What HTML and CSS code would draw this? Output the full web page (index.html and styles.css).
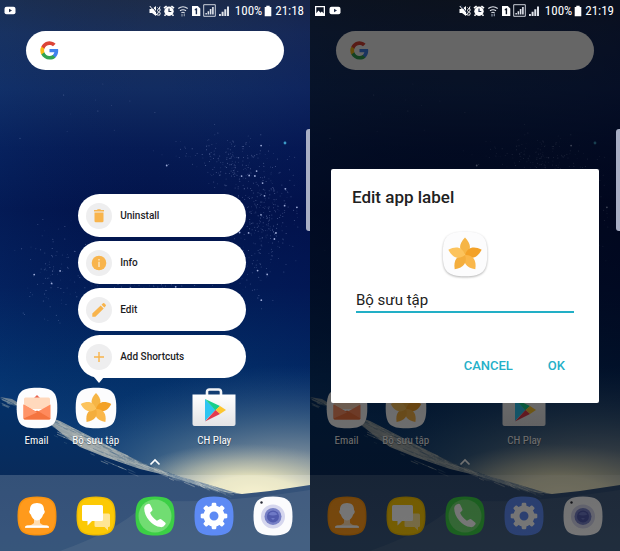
FILE: index.html
```html
<!DOCTYPE html>
<html lang="vi">
<head>
<meta charset="utf-8">
<meta name="viewport" content="width=device-width, initial-scale=1">
<title>Edit app label</title>
<link rel="stylesheet" href="styles.css">
</head>
<body>
<svg class="sprites" aria-hidden="true">
  <defs>
    <linearGradient id="sky" x1="0" y1="0" x2="0" y2="1">
      <stop offset="0" stop-color="#1d2c49"/><stop offset=".06" stop-color="#1a2f59"/>
      <stop offset=".16" stop-color="#122c61"/><stop offset=".27" stop-color="#061b54"/>
      <stop offset=".38" stop-color="#02134a"/><stop offset=".52" stop-color="#021b55"/>
      <stop offset=".68" stop-color="#033069"/><stop offset=".8" stop-color="#0d3e76"/>
    </linearGradient>
    <linearGradient id="shade" x1="0" y1="0" x2="1" y2="0">
      <stop offset="0" stop-color="#0c4390" stop-opacity=".16"/><stop offset=".5" stop-color="#062060" stop-opacity="0"/>
      <stop offset="1" stop-color="#000850" stop-opacity=".2"/>
    </linearGradient>
    <radialGradient id="haze" gradientUnits="userSpaceOnUse" cx="0" cy="0" r="1" gradientTransform="translate(290 500) scale(260 135)">
      <stop offset="0" stop-color="#a5adaa"/><stop offset=".3" stop-color="#8c9aa2" stop-opacity=".9"/>
      <stop offset=".6" stop-color="#4e6f8c" stop-opacity=".65"/><stop offset="1" stop-color="#244f80" stop-opacity="0"/>
    </radialGradient>
    <radialGradient id="glow" gradientUnits="userSpaceOnUse" cx="0" cy="0" r="1" gradientTransform="translate(255 494) rotate(3) scale(130 50)">
      <stop offset="0" stop-color="#f4eec4"/><stop offset=".35" stop-color="#e9e5bd" stop-opacity=".95"/>
      <stop offset=".65" stop-color="#c3c5ae" stop-opacity=".6"/><stop offset="1" stop-color="#9ba7a5" stop-opacity="0"/>
    </radialGradient>
    <linearGradient id="ground" x1="0" y1="0" x2="0" y2="1">
      <stop offset="0" stop-color="#033068"/><stop offset=".5" stop-color="#082b5b"/><stop offset="1" stop-color="#0c315f"/>
    </linearGradient>
    <linearGradient id="snow" x1="0" y1="0" x2="1" y2="0">
      <stop offset="0" stop-color="#667d92"/><stop offset=".35" stop-color="#a5adad"/><stop offset=".7" stop-color="#8797a1"/><stop offset="1" stop-color="#57728b"/>
    </linearGradient>
    <linearGradient id="bag" x1="0" y1="0" x2="0" y2="1"><stop offset="0" stop-color="#fff"/><stop offset="1" stop-color="#e3e3e5"/></linearGradient>
    <filter id="soft"><feGaussianBlur stdDeviation=".5"/></filter>
  </defs>

  <symbol id="wallpaper" viewBox="0 0 310 551" preserveAspectRatio="none">
    <rect width="310" height="551" fill="url(#sky)"/>
    <rect width="310" height="551" fill="url(#shade)"/>
    <rect y="350" width="310" height="201" fill="url(#haze)"/>
    <rect y="400" width="310" height="151" fill="url(#glow)"/>
    <g id="stars"></g>
    <circle cx="285" cy="143" r="1.4" fill="#3c9bc8"/>
    <path d="M0 397 12 400 30 412 60 422 95 440 140 462 180 477 225 492 242 494 270 491 310 485V551H0z" fill="url(#ground)"/>
    <path d="M0 397 12 399 32 411 60 421 95 439 140 462 160 471 200 482 240 494 210 489 165 475 140 469 105 457 80 447 66 437 50 424 20 407z" fill="url(#snow)" filter="url(#soft)"/>
    <g id="ridge" fill="none"></g>
    <path d="M150 500Q210 505 310 490V551H60Q120 530 150 500z" fill="#6d8190" opacity=".16" filter="url(#soft)"/>
  </symbol>

  <symbol id="youtube" viewBox="0 0 12 9"><rect x=".5" y=".8" width="11" height="7.4" rx="2" fill="#fff"/><path d="M5 2.8v3.4l3-1.7z" fill="#24314c"/></symbol>
  <symbol id="picture" viewBox="0 0 12 12"><path fill="#fff" fill-rule="evenodd" d="M1 1h10v10H1zM2.3 2.3v6l2.2-2.7 2 2.1 1.4-1.3 1.8 2V2.3z"/></symbol>
  <symbol id="mute" viewBox="0 0 12 12"><path fill="#fff" d="M.5 4h2.500L7 1v10L3 8H.5z"/><path d="M1.800 0l7 9" stroke="#22304c" stroke-width="1"/><path d="M.8 1l7.500 9.500M8.500 2.500l1 1-1 2 1 1.500-1 2 1 1.500M11 1.500l-.6 1.500.8 2-.8 1.500.8 2-.8 2" fill="none" stroke="#fff"/></symbol>
  <symbol id="alarm" viewBox="0 0 12 12"><circle cx="6" cy="6.3" r="4.700" fill="#fff"/><path d="M1 3.2 3.6 1M11 3.2 8.4 1M2.7 9.5l-1.2 1.3M9.3 9.5l1.2 1.3" stroke="#fff" stroke-width="1.6"/><path d="M6 3.5v3h2.3" fill="none" stroke="#24314c" stroke-width="1.2"/></symbol>
  <symbol id="wifi" viewBox="0 0 12 12"><path d="M1.3 3.5q4.7-3.6 9.4 0M3 5.8q3-2.2 6 0M4.4 7.8q1.6-1 3.2 0" fill="none" stroke="#dfe3ea" stroke-width="1.1"/><path d="M5 9v2.6M7.3 8.4v2.8" stroke="#8d97a9" stroke-width="1.2"/></symbol>
  <symbol id="sim" viewBox="0 0 10 12"><path fill="#fff" fill-rule="evenodd" d="M1 1h5.8L9.3 3.5V11H1zM3.7 4.2v1h1v4h1.4V3.3h-1z"/></symbol>
  <symbol id="bars" viewBox="0 0 12 12"><path fill="#dfe3ea" d="M1 9h1.900v2H1zM3.600 6.8h2V11h-2zM6.300 4.2h2V11h-2zM9 1.5h2V11H9z"/></symbol>
  <symbol id="barsbox" viewBox="0 0 13 13"><path d="M.7.7h11.6v11.6H.7z" fill="none" stroke="#dfe3ea" stroke-width=".9"/><path fill="#dfe3ea" d="M2.4 9h1.500v1.6H2.4zM4.6 7.2h1.500v3.4H4.6zM6.8 5.1h1.600v5.5H6.8zM9.1 3h1.600v7.6H9.1z"/></symbol>
  <symbol id="battery" viewBox="0 0 8 12"><path fill="#fff" d="M2.300.8h3.400V2h1.600v9.200H.7V2h1.600z"/></symbol>

  <symbol id="google" viewBox="0 0 48 48">
    <path fill="#4081ec" d="M46 24.6c0-1.600-.1-3-.4-4.600H24v8.700h12.400c-.6 3-2.200 5.400-4.700 7v5.800h7.500C43.500 37.500 46 31.600 46 24.600z"/>
    <path fill="#31a452" d="M24 47c6.200 0 11.500-2 15.300-5.600l-7.500-5.800c-2 1.400-4.700 2.300-7.800 2.300-6 0-11-4-12.900-9.500H3.400v6C7.200 42 15 47 24 47z"/>
    <path fill="#f8bb16" d="M11.100 28.400a14 14 0 0 1 0-8.800v-6H3.400a23 23 0 0 0 0 20.800z"/>
    <path fill="#dc4437" d="M24 10.100c3.400 0 6.400 1.200 8.800 3.400l6.600-6.600A23 23 0 0 0 3.400 13.600l7.700 6C13 14.100 18 10.100 24 10.100z"/>
  </symbol>

  <symbol id="trash" viewBox="0 0 16 16"><path fill="#f8b44c" d="M3 2h3l.7-.7h2.600L10 2h3v1.500H3zM3.500 4.400h9V13q0 1.300-1.300 1.300H4.800Q3.500 14.300 3.500 13z"/></symbol>
  <symbol id="info" viewBox="0 0 16 16"><circle cx="8" cy="8" r="7.300" fill="#f8b44c"/><path d="M8 4v1.500M8 6.800V12" stroke="#fbe4bb" stroke-width="1.500"/></symbol>
  <symbol id="pencil" viewBox="0 0 16 16"><path fill="#f8b44c" d="M1.300 14.700v-3.200L9.700 3.400l3 3-8.300 8.300zM10.500 2.700l1.500-1.400q.7-.5 1.300 0l1.400 1.500q.6.600 0 1.200l-1.300 1.500z"/></symbol>
  <symbol id="plus" viewBox="0 0 16 16"><path d="M8 3v10M3 8h10" stroke="#f8b44c" stroke-width="1.400"/></symbol>

  <symbol id="email" viewBox="0 0 42 42">
    <path d="M21 .7C37 .7 41.300 5 41.300 21S37 41.300 21 41.300.7 37 .7 21 5 .7 21 .7z" fill="#fdfdfe"/>
    <path d="M17 12l4-4 4 4z" fill="#e8634c"/><path d="M8 12q0-1.500 1.500-1.500h23Q34 10.500 34 12v10H8z" fill="#ffd9bd"/>
    <path d="M7.500 17.500 21 25l13.500-7.500V31q0 1.500-1.500 1.500H9Q7.500 32.500 7.500 31z" fill="#ff8a5c"/>
    <path d="M7.500 31.500 21 23.500l13.500 8q-.3 1-1.500 1H9q-1.200 0-1.500-1z" fill="#f4743f"/><path d="M7.500 17.500 21 25.500 7.500 31.500z" fill="#ff9468"/>
  </symbol>
  <symbol id="gallery" viewBox="0 0 42 42">
    <path d="M21 .7C37 .7 41.300 5 41.300 21S37 41.300 21 41.300.7 37 .7 21 5 .7 21 .7z" fill="#fcfcfd"/>
    <g transform="translate(21 22)">
      <path d="M0 0C-6-4-6-10 0-16 6-10 6-4 0 0z" fill="#f6b545"/>
      <path d="M0 0C-6-4-6-10 0-16 6-10 6-4 0 0z" fill="#f3a127" transform="rotate(72)"/>
      <path d="M0 0C-6-4-6-10 0-16 6-10 6-4 0 0z" fill="#fab74a" transform="rotate(144)"/>
      <path d="M0 0C-6-4-6-10 0-16 6-10 6-4 0 0z" fill="#f4ae3d" transform="rotate(216)"/>
      <path d="M0 0C-6-4-6-10 0-16 6-10 6-4 0 0z" fill="#fcc35c" transform="rotate(288)"/>
    </g>
  </symbol>
  <symbol id="play" viewBox="0 0 44 42">
    <path d="M15 8V5q0-2.500 2.500-2.500h9Q29 2.500 29 5v3" fill="none" stroke="#f3f4f6" stroke-width="2.600"/>
    <path d="M.5 7.500h43V37q0 2-2 2h-39q-2 0-2-2z" fill="url(#bag)"/>
    <path d="M13 12v22l10.500-11z" fill="#2fc5f2"/><path d="M13 12l15 7-4.500 4.500z" fill="#18cf8c"/><path d="M28 19l6 4-6 4-4.500-4z" fill="#fdc62f"/><path d="M13 34.500l10.500-11.500 4.500 4z" fill="#e33b4e"/>
  </symbol>
  <symbol id="contacts" viewBox="0 0 40 40">
    <path d="M20 .5C35 .5 39.500 5 39.500 20S35 39.500 20 39.500.5 35 .5 20 5 .5 20 .5z" fill="#f7920f"/>
    <path d="M20 2C34 2 38 6 38 20s-4 18-18 18S2 34 2 20 6 2 20 2z" fill="#ff9a1c"/>
    <path d="M17 23h6v4q2 2.500 8 2.800 1 .2 1 2H8q0-1.800 1-2 6-.3 8-2.800z" fill="#ffdcb0"/>
    <path d="M20 7c5 0 7.200 3 7 7 1.500 1 .5 4-.8 4.500Q24.500 24 20 24.500q-4.500-.5-6.200-6c-1.300-.5-2.300-3.500-.8-4.500-.2-4 2-7 7-7z" fill="#fff"/>
    <path d="M8 31.800q0-2 2-2.300h20q2 .3 2 2.300z" fill="#fff"/>
  </symbol>
  <symbol id="messages" viewBox="0 0 40 40">
    <path d="M20 .5C35 .5 39.500 5 39.500 20S35 39.500 20 39.500.5 35 .5 20 5 .5 20 .5z" fill="#eebb02"/>
    <path d="M20 2C34 2 38 6 38 20s-4 18-18 18S2 34 2 20 6 2 20 2z" fill="#fcc905"/>
    <path d="M20 17.500h12.500q1.500 0 1.500 1.500v10.500q0 1.500-1.500 1.500H32v3.500L28.500 31H20q-1.500 0-1.500-1.500V19z" fill="#ffe694"/>
    <path d="M7.500 9h18Q27 9 27 10.500v13q0 1.500-1.500 1.500H16l-4.500 4.500V25h-4Q6 25 6 23.500v-13Q6 9 7.500 9z" fill="#fff"/>
  </symbol>
  <symbol id="phone" viewBox="0 0 40 40">
    <path d="M20 .5C35 .5 39.500 5 39.500 20S35 39.500 20 39.500.5 35 .5 20 5 .5 20 .5z" fill="#3ccf46"/>
    <circle cx="20" cy="20" r="16.500" fill="#71dd72"/>
    <path d="M13 8q1.500-.5 2.300.8l2 4.200q.5 1.200-.4 2l-1.800 1.800q1.400 4 6.800 8l2.700-1.600q1-.5 1.900.2l3.600 3q1 1 .2 2.200-1.700 2.800-4.600 2.500C17 30 9.200 21 9.200 12.200 9.200 10 11 8.600 13 8z" fill="#fff"/>
  </symbol>
  <symbol id="settings" viewBox="0 0 40 40">
    <path d="M20 .5C35 .5 39.500 5 39.500 20S35 39.500 20 39.500.5 35 .5 20 5 .5 20 .5z" fill="#5d8af4"/>
    <g fill="#fff"><g id="teeth"><path d="M17.300 11l.5-3.500q.2-.8 1-.8h2.400q.8 0 1 .8l.5 3.500zM17.300 29l.5 3.500q.2.800 1 .8h2.400q.8 0 1-.8l.5-3.500z"/><path d="M11 17.300l-3.500.5q-.8.200-.8 1v2.400q0 .8.800 1l3.500.5zM29 17.300l3.500.5q.8.200.8 1v2.400q0 .8-.8 1l-3.500.5z"/></g><use href="#teeth" transform="rotate(45 20 20)"/></g>
    <circle cx="20" cy="20" r="7.500" fill="none" stroke="#fff" stroke-width="6"/>
  </symbol>
  <symbol id="camera" viewBox="0 0 40 40">
    <path d="M20 .5C35 .5 39.500 5 39.500 20S35 39.500 20 39.500.5 35 .5 20 5 .5 20 .5z" fill="#fbfbfd"/>
    <circle cx="8.500" cy="6.500" r="1.200" fill="#282a35"/><circle cx="20" cy="20.500" r="12" fill="#d5d6ee"/><circle cx="20" cy="20.500" r="8.500" fill="#767fc5"/><circle cx="20" cy="20.500" r="6" fill="#505aac"/><path d="M15.500 18.500a5 5 0 0 1 9 0q-4.500 2-9 0zM18 22h4l-2 2z" fill="#6e79c6"/>
  </symbol>
  <symbol id="up" viewBox="0 0 12 8"><path d="M1.500 6.500 6 2l4.500 4.500" fill="none" stroke="#fff" stroke-width="1.700"/></symbol>
</svg>

<main class="screens">
  <section class="phone">
    <svg class="wallpaper"><use href="#wallpaper"/></svg>
    <header class="status">
      <svg class="note"><use href="#youtube"/></svg>
      <div class="system">
        <svg class="glyph"><use href="#mute"/></svg><svg class="glyph"><use href="#alarm"/></svg><svg class="glyph wifi"><use href="#wifi"/></svg><svg class="glyph narrow"><use href="#sim"/></svg><svg class="glyph boxed"><use href="#barsbox"/></svg><svg class="glyph"><use href="#bars"/></svg>
        <span class="percent">100%</span><svg class="glyph battery"><use href="#battery"/></svg><time class="clock">21:18</time>
      </div>
    </header>
    <div class="home">
      <label class="search"><svg class="logo"><use href="#google"/></svg><input type="search" aria-label="Google"></label>
      <div class="apps">
        <button class="app"><svg class="icon"><use href="#email"/></svg>Email</button>
        <div class="app-slot">
          <button class="app"><svg class="icon"><use href="#gallery"/></svg>Bộ sưu tập</button>
          <div class="menu">
            <button class="action"><span class="disc"><svg><use href="#trash"/></svg></span>Uninstall</button>
            <button class="action"><span class="disc"><svg><use href="#info"/></svg></span>Info</button>
            <button class="action"><span class="disc"><svg><use href="#pencil"/></svg></span>Edit</button>
            <button class="action"><span class="disc"><svg><use href="#plus"/></svg></span>Add Shortcuts</button>
          </div>
        </div>
        <button class="app store"><svg class="icon wide"><use href="#play"/></svg>CH Play</button>
      </div>
      <button class="drawer" aria-label="Apps"><svg><use href="#up"/></svg></button>
      <nav class="dock">
        <button aria-label="Contacts"><svg><use href="#contacts"/></svg></button>
        <button aria-label="Messages"><svg><use href="#messages"/></svg></button>
        <button aria-label="Phone"><svg><use href="#phone"/></svg></button>
        <button aria-label="Settings"><svg><use href="#settings"/></svg></button>
        <button aria-label="Camera"><svg><use href="#camera"/></svg></button>
      </nav>
    </div>
    <span class="edge"></span>
  </section>

  <section class="phone">
    <svg class="wallpaper"><use href="#wallpaper"/></svg>
    <header class="status">
      <svg class="glyph"><use href="#picture"/></svg><svg class="note"><use href="#youtube"/></svg>
      <div class="system">
        <svg class="glyph"><use href="#mute"/></svg><svg class="glyph"><use href="#alarm"/></svg><svg class="glyph wifi"><use href="#wifi"/></svg><svg class="glyph narrow"><use href="#sim"/></svg><svg class="glyph boxed"><use href="#barsbox"/></svg><svg class="glyph"><use href="#bars"/></svg>
        <span class="percent">100%</span><svg class="glyph battery"><use href="#battery"/></svg><time class="clock">21:19</time>
      </div>
    </header>
    <div class="home">
      <label class="search"><svg class="logo"><use href="#google"/></svg><input type="search" aria-label="Google"></label>
      <div class="apps">
        <button class="app"><svg class="icon"><use href="#email"/></svg>Email</button>
        <button class="app"><svg class="icon"><use href="#gallery"/></svg>Bộ sưu tập</button>
        <button class="app store"><svg class="icon wide"><use href="#play"/></svg>CH Play</button>
      </div>
      <button class="drawer" aria-label="Apps"><svg><use href="#up"/></svg></button>
      <nav class="dock">
        <button aria-label="Contacts"><svg><use href="#contacts"/></svg></button>
        <button aria-label="Messages"><svg><use href="#messages"/></svg></button>
        <button aria-label="Phone"><svg><use href="#phone"/></svg></button>
        <button aria-label="Settings"><svg><use href="#settings"/></svg></button>
        <button aria-label="Camera"><svg><use href="#camera"/></svg></button>
      </nav>
    </div>
    <div class="overlay">
      <form class="dialog" role="dialog" aria-labelledby="dialog-title">
        <h1 id="dialog-title">Edit app label</h1>
        <svg class="preview"><use href="#gallery"/></svg>
        <input class="field" type="text" value="Bộ sưu tập" aria-labelledby="dialog-title">
        <div class="buttons"><button type="button">CANCEL</button><button type="button">OK</button></div>
      </form>
    </div>
    <span class="edge"></span>
  </section>
</main>
<script src="wallpaper.js"></script>
</body>
</html>
```
FILE: styles.css
```css
* { box-sizing: border-box; }
body { margin: 0; background: #02134a; font-family: "Roboto Condensed", Roboto, sans-serif; color: #fff; }
button, input { font: inherit; color: inherit; border: 0; padding: 0; margin: 0; background: none; outline: 0; }
svg { display: block; flex: none; }
.sprites { position: absolute; width: 0; height: 0; }

.screens { display: grid; grid-template-columns: 1fr 1fr; min-height: 100vh; }
.phone { position: relative; display: flex; flex-direction: column; overflow: hidden; }
.wallpaper { position: absolute; inset: 0; width: 100%; height: 100%; }

.status { position: relative; z-index: 3; display: flex; align-items: center; gap: 3px; height: 21px; padding: 0 6px 0 4px; font-size: 13px; }
.system { display: flex; align-items: center; margin-left: auto; gap: 2px; }
.note { width: 12px; height: 9px; }
.glyph { width: 12px; height: 12px; }
.glyph.narrow { width: 10px; }
.glyph.boxed { width: 13px; height: 13px; }
.glyph.battery { width: 8px; }
.percent { margin-left: 3px; }
.clock { margin-left: 1px; }

.home { position: relative; z-index: 1; flex: 1; display: flex; flex-direction: column; }
.search { display: flex; align-items: center; height: 39px; margin: 10px 26px 0; padding: 0 14px; border-radius: 20px; background: #fff; }
.search input { flex: 1; min-width: 0; color: #222; }
.logo { width: 19px; height: 19px; }

.apps { display: grid; grid-template-columns: repeat(5, 1fr); margin: auto 7px 0; }
.app-slot { position: relative; }
.app { display: flex; flex-direction: column; align-items: center; gap: 5px; width: 100%; font-size: 11px; line-height: 14px; white-space: nowrap; text-shadow: 0 1px 1px rgba(0, 0, 0, .4); }
.store { grid-column: 4; }
.icon { width: 42px; height: 42px; }
.icon.wide { width: 44px; }

.menu { position: absolute; left: 12px; bottom: 100%; z-index: 2; display: flex; flex-direction: column; gap: 4px; width: 168px; margin-bottom: 9px; }
.menu::after { content: ""; position: absolute; left: 16px; top: 100%; margin-top: -1px; border: 5px solid transparent; border-top: 6px solid #fff; border-bottom: 0; }
.action { display: flex; align-items: center; gap: 8px; height: 43px; padding: 0 8px; border-radius: 22px; background: #fff; color: #1d1d1f; font: 500 10px Roboto, sans-serif; }
.disc { display: grid; place-items: center; width: 26px; height: 26px; border-radius: 50%; background: #eeeeef; }
.disc svg { width: 16px; height: 16px; }

.drawer { display: grid; place-items: center; height: 27px; }
.drawer svg { width: 12px; height: 8px; }
.dock { display: grid; grid-template-columns: repeat(5, 1fr); align-items: center; height: 76px; padding: 6px 7px 0; background: rgba(255, 255, 255, .18); }
.dock button { display: grid; place-items: center; }
.dock svg { width: 40px; height: 40px; }

.edge { position: absolute; z-index: 3; right: 0; top: 129px; width: 4px; height: 102px; border-radius: 3px 0 0 3px; background: #a9afc5; }

.overlay { position: absolute; inset: 0; z-index: 2; display: flex; align-items: center; padding: 21px 21px 0; background: linear-gradient(rgba(0, 0, 0, .6) 60%, rgba(0, 0, 0, .53)); }
.dialog { display: flex; flex-direction: column; width: 100%; padding: 16px 21px 25px; border-radius: 2px; background: #fff; color: #212121; font-family: Roboto, sans-serif; }
.dialog h1 { margin: 0; font-size: 17px; line-height: 24px; font-weight: 500; }
.preview { align-self: center; width: 46px; height: 46px; margin: 22px 0 12px; filter: drop-shadow(0 1px 1px rgba(0, 0, 0, .3)); }
.field { height: 24px; margin: 0 4px; border-bottom: 2px solid #22afc6; font-size: 15px; }
.buttons { display: flex; justify-content: flex-end; gap: 35px; margin-top: 41px; padding-right: 13px; color: #25b0c8; font-size: 13px; line-height: 24px; font-weight: 500; }
```
FILE: wallpaper.js
```js
// Seeded generator keeps the star field the same on every load.
let seed = 71;
const rand = () => (seed = (seed * 16807) % 2147483647) / 2147483647;
const spread = () => rand() + rand() + rand() - 1.5;

const clusters = [
  { x: 232, y: 162, w: 34, h: 26, n: 170 },
  { x: 262, y: 210, w: 32, h: 45, n: 300 },
  { x: 255, y: 265, w: 30, h: 36, n: 90 },
  { x: 55, y: 272, w: 34, h: 44, n: 110 },
  { x: 150, y: 285, w: 75, h: 12, n: 110 },
  { x: 185, y: 153, w: 26, h: 10, n: 18 },
  { x: 150, y: 100, w: 120, h: 50, n: 14 }
];
let stars = "";
for (const c of clusters) {
  for (let i = 0; i < c.n; i++) {
    const bright = rand();
    const r = bright > 0.96 ? 0.9 : 0.5;
    const alpha = bright > 0.96 ? 0.85 : 0.08 + bright * 0.38;
    stars += `<circle cx="${(c.x + spread() * c.w).toFixed(1)}" cy="${(c.y + spread() * c.h).toFixed(1)}" r="${r}" fill="#b9c6f0" opacity="${alpha.toFixed(2)}"/>`;
  }
}
document.getElementById("stars").innerHTML = stars;

// Snow streaks hang off the ridge line and run down its slope.
const line = [[0, 398], [32, 411], [60, 422], [95, 440], [140, 462], [180, 477], [240, 494]];
let streaks = "";
for (let i = 0; i < 420; i++) {
  const x = rand() * 225;
  const k = line.findIndex(p => p[0] > x);
  const [a, b] = [line[k - 1], line[k]];
  const y = a[1] + (b[1] - a[1]) * (x - a[0]) / (b[0] - a[0]);
  const depth = x < 50 ? 7 : x < 130 ? 20 : 6;
  const drop = rand() * rand() * depth;
  const len = 3 + rand() * 8;
  const color = rand() > 0.55 ? "#c9cdc6" : "#486987";
  streaks += `<path d="M${x.toFixed(1)} ${(y + drop).toFixed(1)}l${len.toFixed(1)} ${(len * 0.42).toFixed(1)}" stroke="${color}" stroke-width=".7" opacity="${(0.25 + rand() * 0.4).toFixed(2)}"/>`;
}
document.getElementById("ridge").innerHTML = streaks;
```
